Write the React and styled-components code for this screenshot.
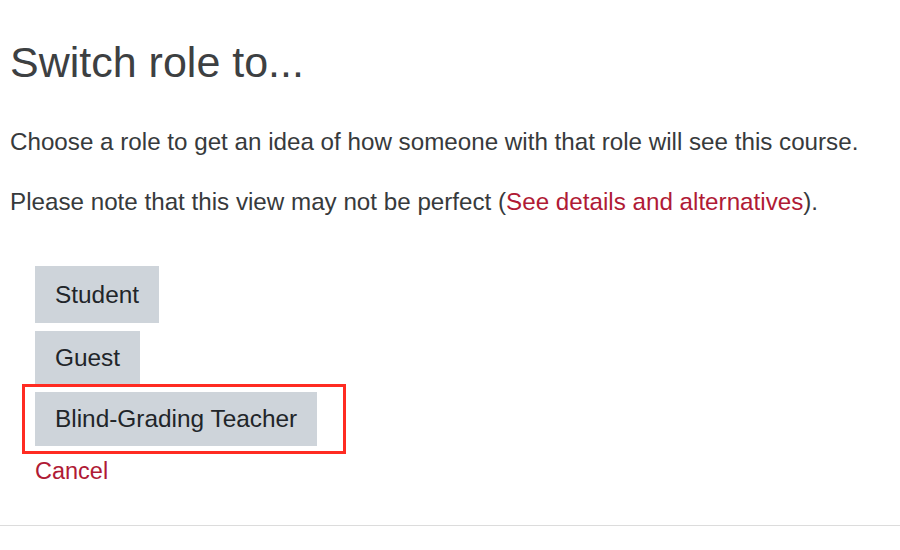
import React from "react";
import styled, { createGlobalStyle } from "styled-components";

const GlobalStyle = createGlobalStyle`
  html, body {
    margin: 0;
    padding: 0;
    background: #fff;
  }
  body {
    font-family: "Liberation Sans", Arial, sans-serif;
    color: #373a3c;
  }
`;

const Page = styled.div`
  width: 900px;
  height: 550px;
  overflow: hidden;
  padding: 36px 0 0 10px;
  box-sizing: border-box;
`;

const Title = styled.h2`
  margin: 0;
  font-size: 43px;
  font-weight: 400;
  line-height: 52px;
  color: #3d4042;
`;

const Text = styled.p`
  margin: ${(p) => p.$top || 0}px 0 0;
  font-size: 24.2px;
  line-height: 28px;
  color: #373a3c;
`;

const Link = styled.a`
  color: #b01a35;
  text-decoration: none;
`;

const RoleList = styled.div`
  display: flex;
  flex-direction: column;
  align-items: flex-start;
  margin: 50px 0 0 25px;
`;

const Highlight = styled.div`
  border: 3px solid #ff2b22;
  padding: 5px 26px 5px 10px;
  margin-left: -13px;
`;

const RoleButton = styled.button`
  display: block;
  border: 0;
  border-radius: 0;
  background: #ced4da;
  color: #212529;
  font-family: "Liberation Sans", Arial, sans-serif;
  font-size: 24.4px;
  padding: 0 20px;
  height: ${(p) => p.$h || 54}px;
  margin-bottom: ${(p) => p.$gap || 0}px;
  cursor: pointer;
`;

const Cancel = styled(Link)`
  display: block;
  font-size: 23.5px;
  line-height: 28px;
  margin: 3px 0 0 25px;
`;

const Rule = styled.hr`
  border: 0;
  border-top: 1px solid #dcdcdc;
  margin: 40px 0 0 -10px;
`;

export default function App() {
  return (
    <Page>
      <GlobalStyle />
      <Title>Switch role to...</Title>
      <Text $top={40}>
        Choose a role to get an idea of how someone with that role will see this course.
      </Text>
      <Text $top={32}>
        Please note that this view may not be perfect (
        <Link href="#">See details and alternatives</Link>).
      </Text>
      <RoleList>
        <RoleButton $h={57} $gap={8}>Student</RoleButton>
        <RoleButton $h={53}>Guest</RoleButton>
        <Highlight>
          <RoleButton $h={54}>Blind-Grading Teacher</RoleButton>
        </Highlight>
      </RoleList>
      <Cancel href="#">Cancel</Cancel>
      <Rule />
    </Page>
  );
}
